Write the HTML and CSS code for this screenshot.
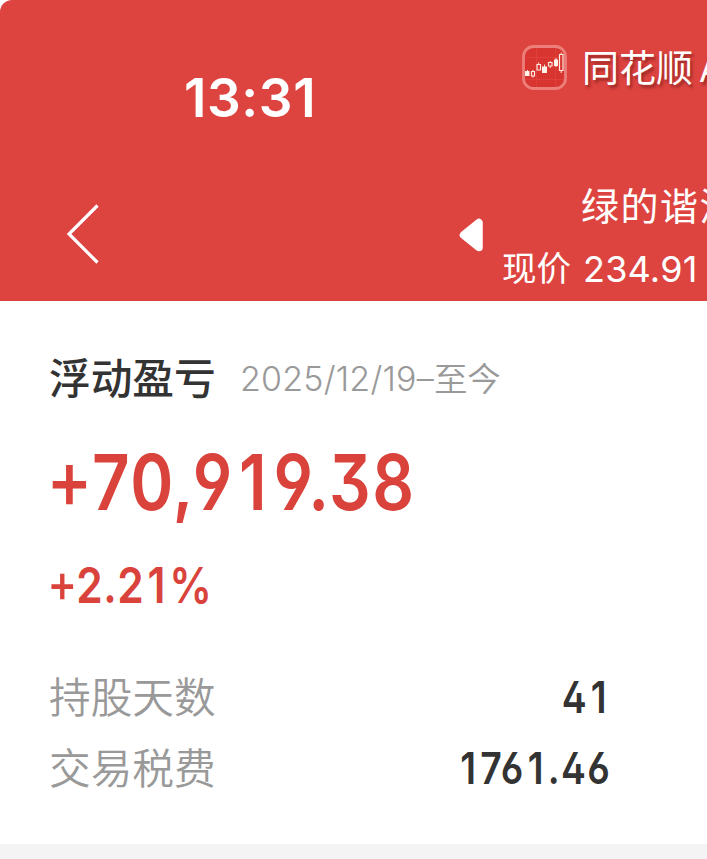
FILE: index.html
```html
<!DOCTYPE html>
<html lang="zh-CN">
<head>
<meta charset="utf-8">
<title>浮动盈亏</title>
<link rel="stylesheet" href="styles.css">
</head>
<body>
<header class="header">
  <div class="status">
    <time class="clock">13:31</time>
    <div class="brand">
      <svg class="brand-icon" viewBox="0 0 45 45" width="45" height="45">
        <rect x="1.5" y="1.5" width="42" height="42" rx="10" fill="#d93530" stroke="#ec7f7a" stroke-width="2.8"/>
        <path d="M3 12.500H42M3 34.500H42M14.500 3V42M33.500 3V42" stroke="#e04a43" stroke-width=".6"/>
        <path d="M5.500 25V31M22.500 19.500V28M34 13V22" stroke="#ffe9dc" stroke-width="1"/>
        <path d="M3 26h4.500v5H3zM20 21.500h5v6.500h-5zM32 14.500h4v6.500h-4z" fill="#fff4ea"/>
        <path d="M9.500 26.500h3v4.500h-3zM15 19.500h3.500v5.500H15zM26.500 17.500h3.500v3.500h-3.500zM37.500 9.500h3.500v16h-3.500z" fill="none" stroke="#ffeadf" stroke-width="1.2"/>
        <path d="M11 25v1.500M11 31v1.500M16.700 17.500v2M28.200 16v1.500M28.200 21v2M39.200 7.500v2M39.200 25.500v2.500" stroke="#ffeadf" stroke-width="1"/>
      </svg>
      <span class="brand-name">同花顺<span class="brand-latin">App</span></span>
    </div>
  </div>
  <nav class="nav">
    <svg class="back" viewBox="0 0 34 60" width="34" height="60"><path d="M31.500 1.500L3 30L31.500 58.500" fill="none" stroke="#fff" stroke-width="3.200"/></svg>
    <svg class="prev" viewBox="0 0 25 34" width="25" height="34"><path d="M20 4.500V29.500L4.500 17Z" fill="#fff" stroke="#fff" stroke-width="7.500" stroke-linejoin="round"/></svg>
    <div class="stock">
      <div class="stock-name">绿的谐波</div>
      <div class="stock-price"><span>现价</span><span class="price">234.91</span></div>
    </div>
  </nav>
</header>
<main class="card">
  <div class="heading">
    <h1 class="title">浮动盈亏</h1>
    <div class="period"><span class="dates">2025/12/19–</span><span class="now">至今</span></div>
  </div>
  <div class="profit"><span class="din"><span class="sign">+</span>70<span class="comma">,</span>9<span class="one">1</span>9.38</span></div>
  <div class="rate"><span class="din"><span class="sign">+</span>2.2<span class="one">1</span>%</span></div>
  <dl class="stats">
    <div class="row"><dt>持股天数</dt><dd><span class="din">4<span class="one">1</span></span></dd></div>
    <div class="row"><dt>交易税费</dt><dd><span class="din"><span class="one">1</span>76<span class="one">1</span>.46</span></dd></div>
  </dl>
</main>
</body>
</html>
```
FILE: styles.css
```css
* { box-sizing: border-box; margin: 0; padding: 0; }
html { background: #fff; }
body {
  width: 707px;
  height: 859px;
  overflow: hidden;
  background: #fff;
  font-family: Inter, "Noto Sans CJK SC", sans-serif;
  white-space: nowrap;
}
.header {
  height: 301px;
  overflow: hidden;
  background: #dd4440;
  border-top-left-radius: 12px;
  color: #fff;
}
.status { display: flex; height: 180px; padding-left: 184px; }
.clock {
  flex: none;
  width: 338px;
  padding-top: 68px;
  font-size: 53px;
  font-weight: 600;
  letter-spacing: .6px;
  line-height: 60px;
}
.brand { display: flex; flex: none; gap: 15px; padding-top: 45px; }
.brand-icon { flex: none; }
.brand-name {
  padding-top: 1px;
  font-size: 37px;
  line-height: 46px;
  text-shadow: 2px 3px 3px rgba(110, 20, 18, .6);
}
.brand-latin { margin-left: 6px; font-size: 34px; }
.nav { display: flex; height: 121px; padding-left: 66px; }
.back { flex: none; margin-top: 24px; }
.prev { flex: none; margin: 38px 18px 0 359px; }
.stock { flex: none; width: 300px; font-weight: 370; }
.stock-name {
  padding-left: 79px;
  font-size: 38px;
  letter-spacing: 1.500px;
  line-height: 52px;
}
.stock-price {
  display: flex;
  gap: 12px;
  font-size: 34.500px;
  line-height: 50px;
  padding-top: 12px;
}
.price { font-size: 36px; font-weight: 400; letter-spacing: .2px; }
.card {
  height: 543px;
  padding: 53px 97px 0 49px;
  color: #333;
}
.heading { display: flex; height: 50px; line-height: 50px; }
.title { width: 191px; font-size: 41.700px; font-weight: 500; }
.period { display: flex; color: #999; font-weight: 350; }
.dates { font-size: 34px; font-weight: 300; letter-spacing: .2px; }
.now { font-size: 33.500px; }
.din {
  display: inline-block;
  font-feature-settings: "cv03", "cv04", "cv09", "ss01";
  letter-spacing: .024em;
  transform: scaleX(.85);
  transform-origin: left;
}
.one { padding: 0 .08em; }
.comma { margin: 0 -.03em; font-size: .9em; font-weight: 700; }
.sign { position: relative; top: -.02em; left: -.04em; margin-right: -.07em; font-size: 1.06em; font-weight: 540; }
.profit {
  height: 90px;
  margin-top: 32px;
  color: #d9433b;
  font-size: 77px;
  font-weight: 580;
  line-height: 90px;
}
.rate {
  height: 60px;
  margin-top: 28px;
  color: #d9433b;
  font-size: 50px;
  font-weight: 580;
  line-height: 60px;
}
.rate .din { letter-spacing: .01em; }
.stats { margin-top: 49px; }
.row { display: flex; justify-content: space-between; height: 71px; line-height: 71px; }
dt { color: #999; font-size: 41.700px; font-weight: 350; }
dd { margin: -1px -1px 0 0; font-size: 44px; font-weight: 580; }
dd .din { letter-spacing: .034em; transform-origin: right; }
body::after { content: ""; display: block; height: 15px; background: #f4f4f4; }
```
